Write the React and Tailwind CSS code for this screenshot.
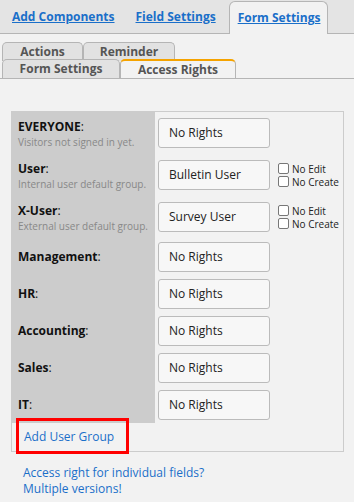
import { useState } from 'react'

const GROUPS = [
  { name: 'EVERYONE', note: 'Visitors not signed in yet.', value: 'No Rights' },
  { name: 'User', note: 'Internal user default group.', value: 'Bulletin User', flags: true },
  { name: 'X-User', note: 'External user default group.', value: 'Survey User', flags: true },
  { name: 'Management', value: 'No Rights' },
  { name: 'HR', value: 'No Rights' },
  { name: 'Accounting', value: 'No Rights' },
  { name: 'Sales', value: 'No Rights' },
  { name: 'IT', value: 'No Rights' },
]

function Check({ label }) {
  const [on, setOn] = useState(false)
  return (
    <label className="flex items-center h-[13px] text-[10px] leading-none text-[#222] whitespace-nowrap cursor-pointer">
      <span
        onClick={() => setOn(!on)}
        className="w-[11px] h-[11px] mr-[3px] rounded-[2px] border border-[#777] bg-white flex items-center justify-center text-[9px]"
      >
        {on ? '✓' : ''}
      </span>
      {label}
    </label>
  )
}

function GroupRow({ group }) {
  return (
    <div className={`flex ${group.note ? 'h-[42px]' : 'h-[37px]'}`}>
      <div className="w-[143px] bg-[#cccccc] pl-[6px] flex flex-col justify-center whitespace-nowrap">
        <div className="text-[12px] leading-[17px] text-[#111]">
          <span className="font-bold">{group.name}</span>:
        </div>
        {group.note && (
          <div className="text-[10px] leading-[14px] text-[#888]">{group.note}</div>
        )}
      </div>
      <div className="flex items-center pl-[3px]">
        <button className="w-[112px] h-[30px] rounded-[3px] border border-[#bbb] bg-[#f7f7f7] text-left pl-[10px] text-[12px] text-[#222] whitespace-nowrap">
          {group.value}
        </button>
        {group.flags && (
          <div className="ml-[8px] flex flex-col">
            <Check label="No Edit" />
            <Check label="No Create" />
          </div>
        )}
      </div>
    </div>
  )
}

export default function App() {
  const [tab, setTab] = useState('Access Rights')

  const subTab = (name, extra = '') => (
    <button
      onClick={() => setTab(name)}
      className={`h-[19px] rounded-t-[5px] border border-b-0 border-[#b5b5b5] text-[12px] font-bold text-[#555] leading-none whitespace-nowrap ${
        tab === name ? 'bg-[#f2f2f2] border-t-2 border-t-[#f5a300] relative z-10 mb-[-1px]' : 'bg-[#e2e2e2]'
      } ${extra}`}
    >
      {name}
    </button>
  )

  return (
    <div className="w-[354px] h-[502px] bg-[#f2f2f2] overflow-hidden font-['Open_Sans',sans-serif]">
      {/* Onglets principaux */}
      <div className="h-[34px] bg-[#e4e4e4] border-b border-[#b5b5b5] flex items-end whitespace-nowrap">
        <a href="#" className="ml-[3px] px-[9px] h-[33px] flex items-center text-[12px] font-bold text-[#1a6fc9] underline">
          Add Components
        </a>
        <a href="#" className="ml-[3px] px-[9px] h-[33px] flex items-center text-[12px] font-bold text-[#1a6fc9] underline">
          Field Settings
        </a>
        <a href="#" className="ml-[4px] w-[99px] pl-[8px] h-[33px] mb-[-1px] flex items-center text-[12px] font-bold text-[#1a6fc9] underline bg-[#f2f2f2] border border-b-0 border-[#b5b5b5] rounded-t-[6px]">
          Form Settings
        </a>
      </div>

      {/* Sous-onglets */}
      <div className="pt-[8px]">
        <div className="flex pl-[2px]">
          {subTab('Actions', 'w-[81px]')}
          {subTab('Reminder', 'w-[92px]')}
        </div>
        <div className="flex pl-[2px] -mt-[2px] border-b border-[#b5b5b5] relative">
          {subTab('Form Settings', 'w-[118px]')}
          {subTab('Access Rights', 'w-[116px]')}
        </div>
      </div>

      {/* Tableau des droits */}
      <div className="ml-[11px] mt-[32px] w-[333px] border border-[#ccc]">
        {GROUPS.map(g => <GroupRow key={g.name} group={g} />)}
        <div className="relative h-[28px] flex items-center pl-[12px]">
          <a href="#" className="text-[12px] text-[#1a6fc9] whitespace-nowrap">Add User Group</a>
          <div className="absolute left-[4px] top-[-5px] w-[113px] h-[36px] border-[3px] border-[#ff0000]" />
        </div>
      </div>

      <div className="pl-[23px] pt-[13px] flex flex-col text-[12px] leading-[16px] whitespace-nowrap">
        <a href="#" className="text-[#1a6fc9]">Access right for individual fields?</a>
        <a href="#" className="text-[#1a6fc9]">Multiple versions!</a>
      </div>
    </div>
  )
}
